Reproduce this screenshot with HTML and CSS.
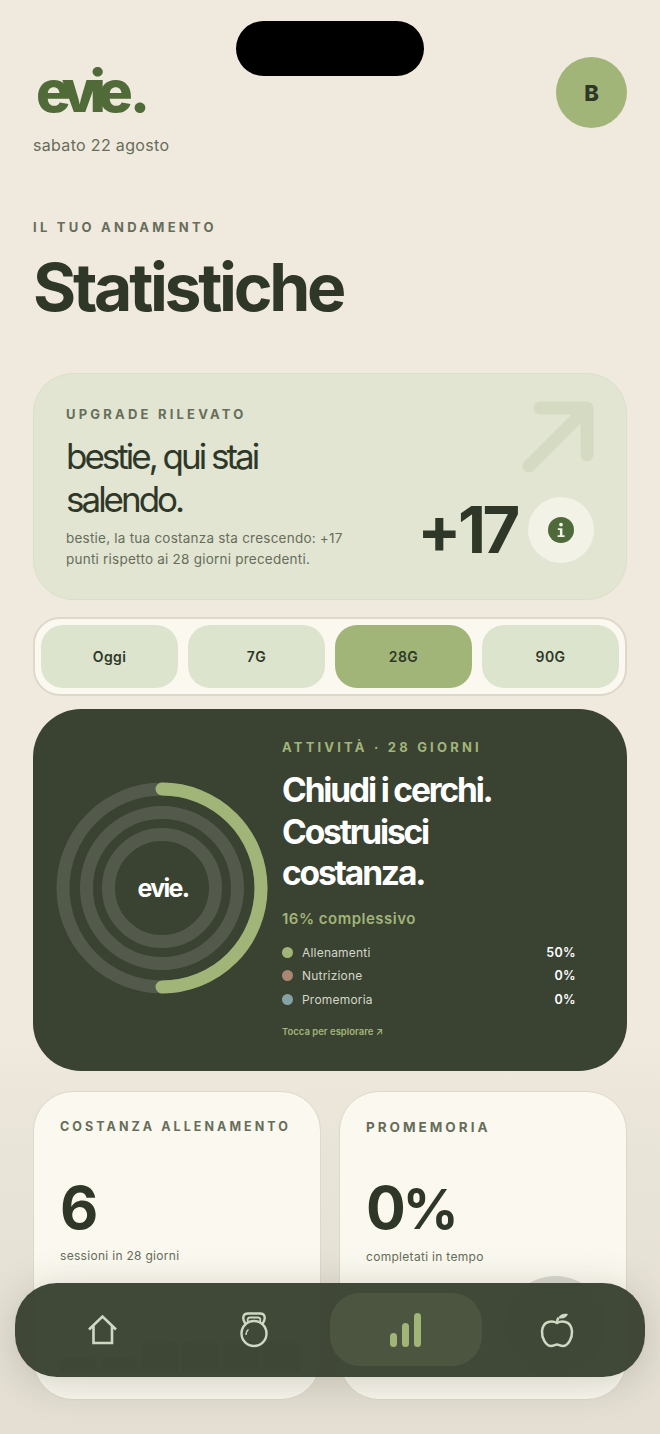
FILE: index.html
```html
<!DOCTYPE html>
<html lang="it">
<head>
  <meta charset="UTF-8">
  <meta name="viewport" content="width=device-width, initial-scale=1.0">
  <title>evie. - Statistiche</title>
  <link rel="stylesheet" href="styles.css">
</head>
<body>
  <div class="notch"></div>

  <div class="page">
    <div class="header">
      <div>
        <div class="logo">evie<span class="logo-dot">.</span></div>
        <div class="date">sabato 22 agosto</div>
      </div>
      <div class="avatar">B</div>
    </div>

    <div class="eyebrow">IL TUO ANDAMENTO</div>
    <h1>Statistiche</h1>

    <div class="hero">
      <svg class="hero-arrow" viewBox="0 0 72 72" width="72" height="72">
        <path d="M18 7H65V54M65 7L7 65" fill="none" stroke="currentColor" stroke-width="13" stroke-linecap="round" stroke-linejoin="round"/>
      </svg>
      <div class="hero-label">UPGRADE RILEVATO</div>
      <div class="hero-row">
        <div>
          <div class="hero-title">bestie, qui stai<br>salendo.</div>
          <p class="hero-desc">bestie, la tua costanza sta crescendo: +17 punti rispetto ai 28 giorni precedenti.</p>
        </div>
        <div class="hero-score">
          <span class="score">+17</span>
          <span class="info-btn">
            <svg viewBox="0 0 26 26" width="26" height="26">
              <circle cx="13" cy="13" r="13" fill="#4f6a3a"/>
              <circle cx="13" cy="7.6" r="1.9" fill="#f3f2e6"/>
              <path d="M9.8 11.2H14.4V18.2H16.6V20H9.6V18.2H11.9V13H9.8Z" fill="#f3f2e6"/>
            </svg>
          </span>
        </div>
      </div>
    </div>

    <div class="tabs">
      <div class="tab">Oggi</div>
      <div class="tab">7G</div>
      <div class="tab active">28G</div>
      <div class="tab">90G</div>
    </div>

    <div class="activity">
      <div class="rings">
        <svg viewBox="0 0 212 212" width="212" height="212">
          <circle class="track" cx="106" cy="106" r="99"/>
          <circle class="track" cx="106" cy="106" r="75.5"/>
          <circle class="track" cx="106" cy="106" r="53.5"/>
          <path class="arc" d="M106 7A99 99 0 0 1 106 205"/>
        </svg>
        <span class="rings-logo">evie.</span>
      </div>
      <div class="activity-text">
        <div class="activity-label">ATTIVITÀ · 28 GIORNI</div>
        <div class="activity-title">Chiudi i cerchi.<br>Costruisci<br>costanza.</div>
        <div class="activity-total">16% complessivo</div>
        <div class="legend">
          <div class="legend-row"><span class="dot dot-green"></span><span class="legend-name">Allenamenti</span><b>50%</b></div>
          <div class="legend-row"><span class="dot dot-brown"></span><span class="legend-name">Nutrizione</span><b>0%</b></div>
          <div class="legend-row"><span class="dot dot-blue"></span><span class="legend-name">Promemoria</span><b>0%</b></div>
        </div>
        <div class="activity-hint">Tocca per esplorare ↗</div>
      </div>
    </div>

    <div class="stats">
      <div class="stat">
        <div class="stat-label">COSTANZA ALLENAMENTO</div>
        <div class="stat-value">6</div>
        <div class="stat-sub">sessioni in 28 giorni</div>
        <div class="bars">
          <span class="bar" style="height:13px"></span>
          <span class="bar" style="height:13px"></span>
          <span class="bar" style="height:30px"></span>
          <span class="bar" style="height:30px"></span>
          <span class="bar" style="height:30px"></span>
          <span class="bar" style="height:30px"></span>
        </div>
      </div>
      <div class="stat">
        <div class="stat-label stat-label-lg">PROMEMORIA</div>
        <div class="stat-value">0<span class="stat-unit">%</span></div>
        <div class="stat-sub">completati in tempo</div>
        <div class="ring-wrap"><span class="ring"></span></div>
      </div>
    </div>
  </div>

  <div class="nav">
    <div class="nav-item">
      <svg viewBox="0 0 32 32" width="32" height="32" fill="none" stroke="currentColor" stroke-width="2.6">
        <path d="M2 15.5L15.5 2.5L29 15.5M6.5 12V29H25V12"/>
      </svg>
    </div>
    <div class="nav-item">
      <svg viewBox="0 0 32 36" width="32" height="36" fill="none" stroke="currentColor" stroke-width="2.4">
        <circle cx="16" cy="21.5" r="12.5"/>
        <path d="M7.5 12C4 7 4.5 1.5 10 1.5H22C27.500 1.5 28 7 24.500 12"/>
        <path d="M10.500 10.500C9 8 9.500 5.500 12 5.500H20C22.500 5.500 23 8 21.500 10.500" stroke-width="1.8"/>
        <path d="M8 23C8 20.500 9 18.500 10.500 17.500" stroke-width="1.4"/>
      </svg>
    </div>
    <div class="nav-item active">
      <svg viewBox="0 0 32 34" width="32" height="34" fill="currentColor">
        <rect x="0" y="20" width="7" height="14" rx="3.5"/>
        <rect x="12" y="10" width="7" height="24" rx="3.5"/>
        <rect x="24" y="0" width="7" height="34" rx="3.5"/>
      </svg>
    </div>
    <div class="nav-item">
      <svg viewBox="0 0 34 36" width="34" height="36" fill="none" stroke="currentColor" stroke-width="2.5">
        <path d="M17 11C13 8.500 3 8 2 19C1.500 26 6 34 11 34C14 34 15 32.500 17 32.500C19 32.500 20 34 23 34C28 34 32.500 26 32 19C31 8 21 8.500 17 11Z"/>
        <path d="M17 10.500C17 8.500 17.500 7 18.500 6"/>
        <path d="M18 6C20 2 24 1 28 2C27 5.500 22.500 7.500 18 6Z" fill="currentColor" stroke="none"/>
      </svg>
    </div>
  </div>
</body>
</html>
```

FILE: styles.css
```css
:root {
  --bg: #f0e9dd;
  --ink: #2f3828;
  --muted: #666d5b;
  --sage: #a2b578;
  --moss: #516b38;
  --dark: #3a4232;
  --cream: #fbf9ef;
  --line: #dcd8ca;
  --tab: #dce4ce;
}
html, body {
  margin: 0;
  height: 1434px;
  overflow: hidden;
}
body {
  position: relative;
  font-family: Inter, "Liberation Sans", sans-serif;
  background: linear-gradient(to bottom, var(--bg) 1040px, #e9e4d8 1150px, #e4dfd2 1434px);
  color: var(--ink);
}
.notch {
  position: absolute;
  top: 21px;
  left: 236px;
  width: 188px;
  height: 55px;
  background: #000;
  border-radius: 28px;
  z-index: 5;
}
.page {
  padding: 57px 33px 0;
}
.header {
  display: flex;
  justify-content: space-between;
  align-items: flex-start;
  height: 152px;
}
.logo {
  font-size: 58px;
  font-weight: 800;
  line-height: 68px;
  letter-spacing: -8px;
  color: var(--moss);
  margin-left: 3px;
}
.logo-dot {
  margin-left: 5px;
}
.date {
  font-size: 16px;
  line-height: 20px;
  letter-spacing: 0.33px;
  color: var(--muted);
  margin-top: 10px;
}
.avatar {
  width: 71px;
  height: 71px;
  border-radius: 50%;
  background: var(--sage);
  display: flex;
  align-items: center;
  justify-content: center;
  font-size: 22px;
  font-weight: 800;
}
.eyebrow {
  font-size: 13px;
  font-weight: 700;
  line-height: 18px;
  letter-spacing: 3.25px;
  color: var(--muted);
  margin-top: 9px;
}
h1 {
  margin: 11px 0 0 0;
  font-size: 66px;
  font-weight: 700;
  line-height: 80px;
  letter-spacing: -3.3px;
}
.hero {
  position: relative;
  box-sizing: border-box;
  height: 227px;
  margin-top: 46px;
  padding: 32px 32px 0;
  background: #e2e5d2;
  border: 1.5px solid #dadfc9;
  border-radius: 40px;
}
.hero-arrow {
  position: absolute;
  top: 27px;
  right: 32px;
  color: #d5dbc3;
}
.hero-label {
  font-size: 13px;
  font-weight: 700;
  line-height: 16px;
  letter-spacing: 3.2px;
  color: var(--muted);
}
.hero-row {
  display: flex;
  justify-content: space-between;
  align-items: flex-end;
}
.hero-title {
  margin-top: 13px;
  font-size: 35px;
  font-weight: 400;
  line-height: 43px;
  letter-spacing: -3px;
}
.hero-desc {
  width: 290px;
  margin: 7px 0 0;
  font-size: 13.5px;
  line-height: 21px;
  letter-spacing: 0.23px;
  color: var(--muted);
}
.hero-score {
  display: flex;
  align-items: center;
  gap: 11px;
  margin-bottom: 7px;
}
.score {
  font-size: 65px;
  font-weight: 700;
  line-height: 66px;
  letter-spacing: -3.4px;
}
.info-btn {
  width: 66px;
  height: 66px;
  border-radius: 50%;
  background: #f3f2e6;
  display: flex;
  align-items: center;
  justify-content: center;
}
.tabs {
  display: flex;
  gap: 10px;
  box-sizing: border-box;
  height: 79px;
  margin-top: 17px;
  padding: 6px;
  background: var(--cream);
  border: 2px solid var(--line);
  border-radius: 27px;
}
.tab {
  flex: 1;
  display: flex;
  align-items: center;
  justify-content: center;
  background: var(--tab);
  border-radius: 22px;
  font-size: 14px;
  font-weight: 600;
  letter-spacing: 0.4px;
}
.tab.active {
  background: var(--sage);
}
.activity {
  display: flex;
  align-items: flex-start;
  box-sizing: border-box;
  height: 362px;
  margin-top: 13px;
  padding: 0 51px 0 23px;
  background: var(--dark);
  border-radius: 48px;
  color: #fff;
}
.rings {
  position: relative;
  width: 212px;
  height: 212px;
  margin-top: 73px;
  flex-shrink: 0;
}
.rings svg {
  display: block;
}
.track {
  fill: none;
  stroke: #535a4b;
  stroke-width: 13;
}
.arc {
  fill: none;
  stroke: var(--sage);
  stroke-width: 13;
  stroke-linecap: round;
}
.rings-logo {
  position: absolute;
  inset: 0 0 0 2px;
  display: flex;
  align-items: center;
  justify-content: center;
  font-size: 25px;
  font-weight: 700;
  letter-spacing: -1.7px;
}
.activity-text {
  flex: 1;
  margin-left: 14px;
  padding-top: 29px;
}
.activity-label {
  font-size: 13px;
  font-weight: 700;
  line-height: 18px;
  letter-spacing: 3.2px;
  color: var(--sage);
}
.activity-title {
  margin-top: 14px;
  font-size: 33.5px;
  font-weight: 700;
  line-height: 41.5px;
  letter-spacing: -2.15px;
}
.activity-total {
  margin-top: 14px;
  font-size: 15px;
  font-weight: 600;
  line-height: 20px;
  letter-spacing: 0.5px;
  color: var(--sage);
}
.legend {
  margin-top: 12px;
}
.legend-row {
  display: flex;
  align-items: center;
  height: 23.5px;
  font-size: 12px;
  letter-spacing: 0.2px;
}
.legend-row b {
  font-size: 12.5px;
  font-weight: 600;
  letter-spacing: 0.4px;
}
.legend-name {
  flex: 1;
  color: #d3d7c8;
}
.dot {
  width: 11px;
  height: 11px;
  border-radius: 50%;
  margin-right: 9px;
}
.dot-green { background: var(--sage); }
.dot-brown { background: #ab8672; }
.dot-blue { background: #86a2a5; }
.activity-hint {
  margin-top: 14px;
  font-size: 9.5px;
  font-weight: 600;
  line-height: 14px;
  color: var(--sage);
}
.stats {
  display: grid;
  grid-template-columns: 1fr 1fr;
  gap: 18px;
  margin-top: 20px;
}
.stat {
  box-sizing: border-box;
  height: 309px;
  padding: 26px 20px 0 26px;
  background: var(--cream);
  border: 1.5px solid var(--line);
  border-radius: 40px;
}
.stat-label {
  font-size: 12.5px;
  font-weight: 700;
  line-height: 18px;
  letter-spacing: 3.05px;
  color: var(--muted);
  white-space: nowrap;
}
.stat-label-lg {
  font-size: 13.5px;
  letter-spacing: 3px;
}
.stat-value {
  margin-top: 37px;
  font-size: 59px;
  font-weight: 700;
  line-height: 70px;
  letter-spacing: -3px;
}
.stat-unit {
  font-size: 55px;
}
.stat-sub {
  margin-top: 4px;
  font-size: 12px;
  line-height: 18px;
  letter-spacing: 0.3px;
  color: var(--muted);
}
.bars {
  display: flex;
  align-items: flex-end;
  gap: 4px;
  height: 93px;
  margin-top: 13px;
}
.bar {
  flex: 1;
  background: #c4c6b6;
  border-radius: 6px 6px 0 0;
}
.ring-wrap {
  display: flex;
  justify-content: flex-end;
  margin-top: 10px;
}
.ring {
  width: 101px;
  height: 101px;
  border-radius: 50%;
  background: #d9d8ce;
}
.nav {
  position: absolute;
  left: 15px;
  right: 15px;
  bottom: 57px;
  height: 94px;
  box-sizing: border-box;
  display: flex;
  padding: 10px 12px 11px;
  background: rgba(58, 66, 50, 0.97);
  border-radius: 42px;
  box-shadow: 0 6px 40px rgba(58, 66, 50, 0.22);
  z-index: 3;
}
.nav-item {
  flex: 1;
  display: flex;
  align-items: center;
  justify-content: center;
  color: #cfd8c3;
  border-radius: 30px;
}
.nav-item.active {
  background: #4c5540;
  color: var(--sage);
}
```
